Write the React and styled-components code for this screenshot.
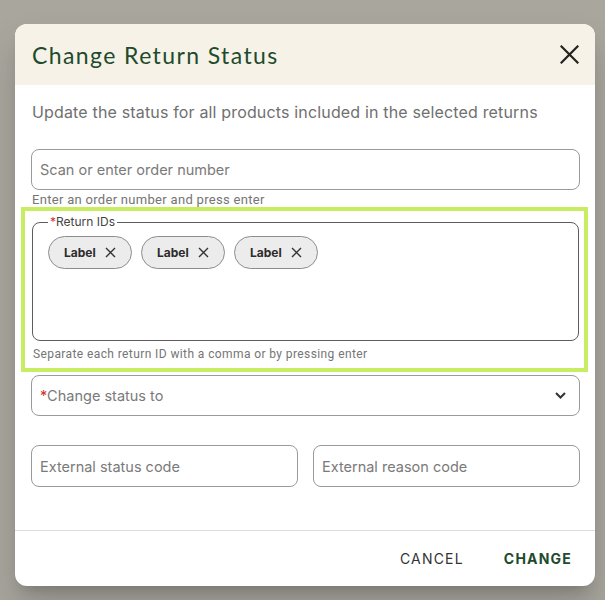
import React from 'react';
import styled, { createGlobalStyle } from 'styled-components';

const GlobalStyle = createGlobalStyle`
  html, body {
    margin: 0;
    padding: 0;
    background: #a9a69e;
  }
  * {
    box-sizing: border-box;
  }
`;

const Backdrop = styled.div`
  width: 605px;
  height: 600px;
  padding: 24px 10px 0 15px;
  font-family: Inter, "Liberation Sans", sans-serif;
`;

const Dialog = styled.div`
  width: 580px;
  height: 562px;
  background: #ffffff;
  border-radius: 12px;
  overflow: hidden;
  display: flex;
  flex-direction: column;
  box-shadow: 0 11px 15px -7px rgba(0, 0, 0, 0.2), 0 24px 38px 3px rgba(0, 0, 0, 0.12);
`;

const Header = styled.div`
  height: 61px;
  flex-shrink: 0;
  background: #f6f2e7;
  display: flex;
  align-items: center;
  justify-content: space-between;
  padding: 0 16px 0 17px;
`;

const Title = styled.h2`
  margin: 0;
  font-family: Lato, "Open Sans", sans-serif;
  font-weight: 400;
  font-size: 23px;
  letter-spacing: 1.4px;
  color: #1e4a2d;
`;

const CloseButton = styled.button`
  border: none;
  background: none;
  padding: 0;
  width: 20px;
  height: 20px;
  display: flex;
  align-items: center;
  justify-content: center;
  cursor: pointer;
`;

const Body = styled.div`
  flex: 1;
  padding: 15px 15px 0 16px;
  display: flex;
  flex-direction: column;
`;

const Intro = styled.p`
  margin: 0 0 25px 1px;
  font-size: 16px;
  line-height: 24px;
  letter-spacing: 0.16px;
  color: #707070;
`;

const Field = styled.div`
  height: ${(p) => p.$height || 41}px;
  border: 1px solid #9a9a9a;
  border-radius: 8px;
  display: flex;
  align-items: center;
  justify-content: space-between;
  padding: 0 13px 0 8px;
  font-size: 14.5px;
  color: #7a7a7a;
  flex: ${(p) => (p.$grow ? 1 : 'none')};
`;

const Required = styled.span`
  color: #d32f2f;
`;

const Helper = styled.div`
  margin: ${(p) => p.$top || 3}px 0 0 1px;
  font-family: Roboto, "Liberation Sans", sans-serif;
  font-size: ${(p) => p.$size || 12}px;
  letter-spacing: ${(p) => p.$spacing || 0.4}px;
  line-height: 14px;
  color: #757575;
`;

const Highlight = styled.div`
  margin: 0 -8px 0 -10px;
  border: 4px solid #c8ec62;
  padding: 4px 5px 7px 7px;
`;

const IdsFieldset = styled.fieldset`
  margin: 0;
  border: 1px solid #5c5c5c;
  border-radius: 8px;
  padding: 7px 15px 0;
  min-width: 0;
`;

const Legend = styled.legend`
  margin-left: 0;
  padding: 0 2px;
  font-size: 12px;
  line-height: 14px;
  color: #444444;
`;

const ChipArea = styled.div`
  min-height: 104px;
  display: flex;
  align-items: flex-start;
  gap: 9px;
`;

const Chip = styled.div`
  width: 84px;
  height: 33px;
  border: 1px solid #8c8c8c;
  border-radius: 17px;
  background: #ececec;
  display: flex;
  align-items: center;
  justify-content: space-between;
  padding: 0 15px 0 15px;
  font-size: 12px;
  font-weight: 700;
  color: #2b2b2b;
`;

const SelectGap = styled.div`
  height: 3px;
`;

const Row = styled.div`
  display: flex;
  gap: 15px;
  margin-top: 29px;
`;

const Footer = styled.div`
  height: 56px;
  flex-shrink: 0;
  border-top: 1px solid #dcdcdc;
  display: flex;
  align-items: center;
  justify-content: flex-end;
  gap: 24px;
  padding: 0 15px 0 0;
`;

const TextButton = styled.button`
  border: none;
  background: none;
  padding: 6px 8px;
  font-family: Inter, "Liberation Sans", sans-serif;
  font-size: 14px;
  letter-spacing: 1.2px;
  font-weight: ${(p) => (p.$primary ? 700 : 400)};
  color: ${(p) => (p.$primary ? '#1e4a2d' : '#333333')};
  cursor: pointer;
`;

const CloseIcon = () => (
  <svg width="19" height="19" viewBox="0 0 19 19">
    <path d="M1.5 1.5 L17.5 17.5 M17.5 1.5 L1.5 17.5" stroke="#222" strokeWidth="2.2" strokeLinecap="square" />
  </svg>
);

const ChipX = () => (
  <svg width="11" height="11" viewBox="0 0 11 11">
    <path d="M1 1 L10 10 M10 1 L1 10" stroke="#333" strokeWidth="1.4" />
  </svg>
);

const Chevron = () => (
  <svg width="11" height="7" viewBox="0 0 11 7">
    <path d="M1 1 L5.5 5.5 L10 1" fill="none" stroke="#333" strokeWidth="2" />
  </svg>
);

const returnIds = ['Label', 'Label', 'Label'];

export default function App() {
  return (
    <>
      <GlobalStyle />
      <Backdrop>
        <Dialog>
          <Header>
            <Title>Change Return Status</Title>
            <CloseButton aria-label="close">
              <CloseIcon />
            </CloseButton>
          </Header>
          <Body>
            <Intro>Update the status for all products included in the selected returns</Intro>
            <Field>Scan or enter order number</Field>
            <Helper $size={13} $spacing={0.3}>Enter an order number and press enter</Helper>
            <Highlight>
              <IdsFieldset>
                <Legend>
                  <Required>*</Required>Return IDs
                </Legend>
                <ChipArea>
                  {returnIds.map((id, i) => (
                    <Chip key={i}>
                      {id}
                      <ChipX />
                    </Chip>
                  ))}
                </ChipArea>
              </IdsFieldset>
              <Helper $top={6}>Separate each return ID with a comma or by pressing enter</Helper>
            </Highlight>
            <SelectGap />
            <Field $height={41}>
              <span>
                <Required>*</Required>Change status to
              </span>
              <Chevron />
            </Field>
            <Row>
              <Field $grow $height={42}>External status code</Field>
              <Field $grow $height={42}>External reason code</Field>
            </Row>
          </Body>
          <Footer>
            <TextButton>CANCEL</TextButton>
            <TextButton $primary>CHANGE</TextButton>
          </Footer>
        </Dialog>
      </Backdrop>
    </>
  );
}
